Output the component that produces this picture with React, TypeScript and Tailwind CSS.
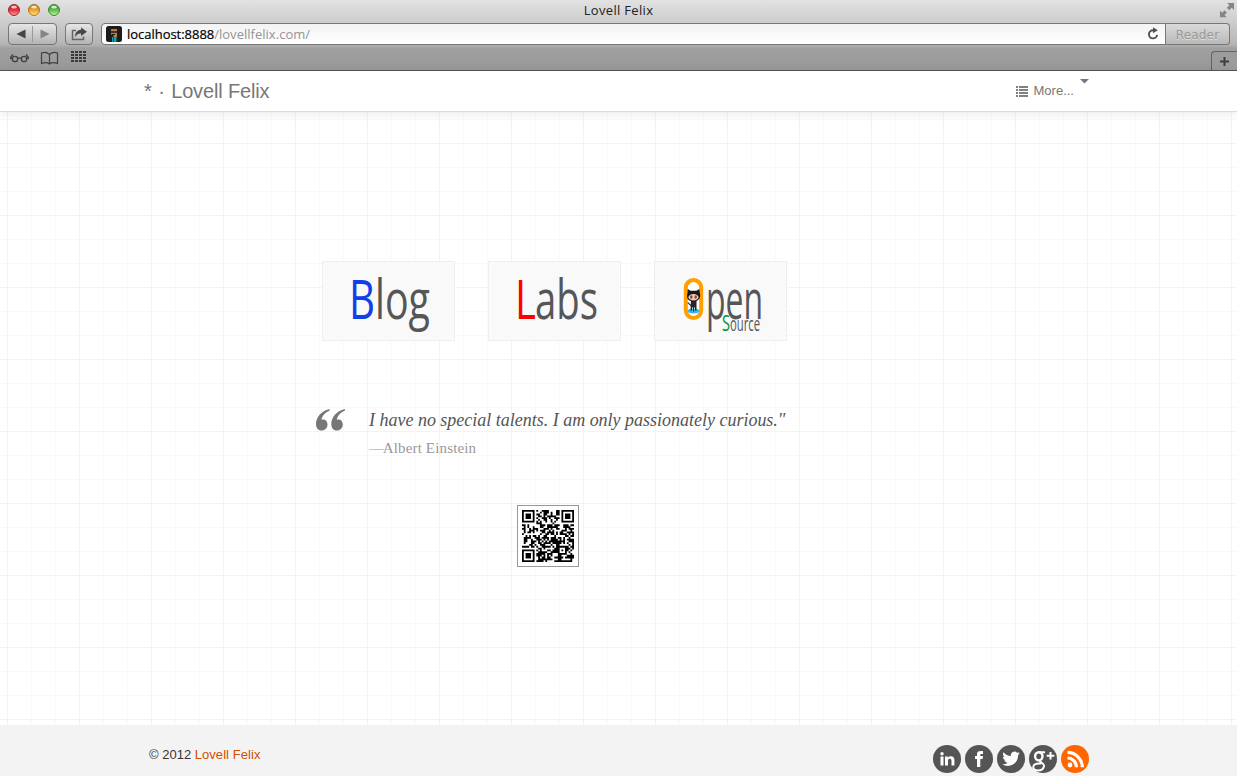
import React from "react";

const N = 29;

function inFinder(x: number, y: number): boolean | null {
  const corners = [
    [0, 0],
    [N - 7, 0],
    [0, N - 7],
  ];
  for (const [cx, cy] of corners) {
    const dx = x - cx;
    const dy = y - cy;
    if (dx >= -1 && dx <= 7 && dy >= -1 && dy <= 7) {
      const d = Math.max(Math.abs(dx - 3), Math.abs(dy - 3));
      return d === 3 || d <= 1;
    }
  }
  return null;
}

function qrPath(): string {
  let seed = 2012;
  let d = "";
  for (let y = 0; y < N; y++) {
    for (let x = 0; x < N; x++) {
      seed = (seed * 1103515245 + 12345) % 2147483648;
      let on = (seed >> 16) % 100 < 54;
      const f = inFinder(x, y);
      if (f !== null) on = f;
      else if (Math.abs(x - 22) <= 2 && Math.abs(y - 22) <= 2) {
        on = Math.max(Math.abs(x - 22), Math.abs(y - 22)) !== 1;
      }
      if (on) d += `M${x} ${y}h1v1h-1z`;
    }
  }
  return d;
}

const QR = qrPath();

function Light({ id, dark, mid, light }: { id: string; dark: string; mid: string; light: string }) {
  return (
    <svg width="14" height="14" viewBox="0 0 14 14">
      <defs>
        <linearGradient id={id} x1="0" y1="0" x2="0" y2="1">
          <stop offset="0" stopColor={dark} />
          <stop offset="0.5" stopColor={mid} />
          <stop offset="1" stopColor={light} />
        </linearGradient>
      </defs>
      <circle cx="7" cy="7.400" r="6.200" fill="#fff" opacity="0.5" />
      <circle cx="7" cy="7" r="5.500" fill={`url(#${id})`} stroke={dark} strokeWidth="1" />
      <ellipse cx="7" cy="4" rx="2.900" ry="1.600" fill="#fff" opacity="0.75" />
    </svg>
  );
}

function BrowserChrome() {
  return (
    <header className="flex h-[71px] flex-col border-b border-[#565656] bg-[linear-gradient(#e2e2e2_0px,#cfcfcf_20px,#b5b5b5_44px,#a0a0a0_48px,#999_70px)] font-['DejaVu_Sans',sans-serif]">
      <div className="grid h-[22px] grid-cols-[1fr_auto_1fr] items-start">
        <div className="flex gap-[6px] pl-[7px] pt-[3px]">
          <Light id="red" dark="#a3202b" mid="#e8303c" light="#ff9a98" />
          <Light id="amber" dark="#a8701c" mid="#f0a528" light="#ffe78a" />
          <Light id="green" dark="#37852f" mid="#62bd4f" light="#c0f5a5" />
        </div>
        <div className="font-['Open_Sans',sans-serif] text-[13px] leading-5 tracking-[0.33px] text-[#222]">Lovell Felix</div>
        <svg className="mr-[2px] mt-[2px] justify-self-end" width="16" height="16" viewBox="0 0 16 16" fill="#858585">
          <path d="M8 1h7v7l-2.300-2.300-2.500 2.500-2.300-2.400 2.500-2.500zM1 8.500l2.200 2.200 2.300-2.400L7.900 10.700 5.500 13 7.700 15.200H1z" />
        </svg>
      </div>

      <div className="flex h-[24px] items-start pl-2 pt-[1px]">
        <div className="flex h-[22px] w-[49px] items-center justify-evenly rounded-[4px] border border-[#777] bg-gradient-to-b from-[#e6e6e6] to-[#b4b4b4]">
          <svg width="10" height="10" viewBox="0 0 10 10"><path d="M9.500.5v9L.5 5z" fill="#454545" /></svg>
          <span className="h-[16px] w-px bg-[#999]" />
          <svg width="10" height="10" viewBox="0 0 10 10"><path d="M.5.5v9L9.500 5z" fill="#858585" /></svg>
        </div>
        <div className="ml-2 flex h-[22px] w-[28px] items-center justify-center rounded-[4px] border border-[#777] bg-gradient-to-b from-[#e6e6e6] to-[#b4b4b4]">
          <svg width="18" height="16" viewBox="0 0 18 16">
            <path d="M6 4.500H2.500V13.500h11V10.500" fill="none" stroke="#666" strokeWidth="1.500" />
            <path d="M11 1.500l6 4.200-6 4.200V7.500C8.500 7.400 6.500 8.500 5 11 5 6.500 7.500 4 11 3.800z" fill="#484848" />
          </svg>
        </div>
        <div className="ml-2 flex h-[22px] w-[1065px] items-center rounded-l-[4px] border border-[#777] bg-gradient-to-b from-[#f3f3f3] to-white pl-1">
          <svg className="shrink-0" width="16" height="16" viewBox="0 0 16 16">
            <rect width="16" height="16" rx="2.500" fill="#1d1b1c" />
            <path d="M5 3h6v8H7.500V8.500H5z" fill="#b87d48" />
            <path d="M5 5.200h6v1.500H5zM6 8h3v1H6z" fill="#241a17" />
            <path d="M6 11h1.300v5H6zM8 11h2.500v5H8z" fill="#12a2ad" />
          </svg>
          <div className="ml-[5px] flex-1 whitespace-nowrap font-['Open_Sans',sans-serif] text-[13px] leading-5">
            <span className="tracking-[-0.03px] text-black [-webkit-text-stroke:0.2px_black]">localhost:8888</span>
            <span className="tracking-[0.02px] text-[#949494]">/lovellfelix.com/</span>
          </div>
          <svg className="mr-[5px]" width="14" height="14" viewBox="0 0 14 14">
            <path d="M8.500 3.200H7a4.100 4.100 0 1 0 4.100 4.600" fill="none" stroke="#505050" strokeWidth="1.900" />
            <path d="M7 .3l4.800 3-4.800 3z" fill="#505050" />
          </svg>
        </div>
        <div className="flex h-[22px] w-[64px] items-center justify-center rounded-r-[4px] border border-l-0 border-[#777] bg-gradient-to-b from-[#dadada] to-[#b9b9b9] pt-px text-[12px] tracking-[0.2px] text-[#989898] [text-shadow:0_1px_0_#ddd]">
          Reader
        </div>
      </div>

      <div className="flex h-[24px] items-start justify-between border-t border-[#ababab]">
        <div className="flex pl-[9px] pt-[4px]">
          <svg width="22" height="14" viewBox="0 0 22 14" fill="none" stroke="#424242" strokeWidth="1.300">
            <circle cx="6" cy="8" r="2.700" />
            <circle cx="15" cy="8" r="2.700" />
            <path d="M8.700 7.500q1.800-1.200 3.600 0M3.300 7.500L1 7M17.700 7.500L20 7M1.500 6.500L4 3.500M19.500 6.500L17 3.500" />
          </svg>
          <svg className="ml-[9px]" width="19" height="14" viewBox="0 0 19 14" fill="none" stroke="#424242" strokeWidth="1.200">
            <path d="M9.500 3.500C7.500 1.500 4 1 1.500 2V12.500c2.500-1 6-1 8 .5 2-1.500 5.500-1.500 8-.5V2c-2.500-1-6-.5-8 1.500zV13" />
          </svg>
          <svg className="ml-[12px]" width="17" height="14" viewBox="0 0 17 14" fill="#3a3a3a">
            <path d="M0 0h3v2H0zM4 0h3v2H4zM8 0h3v2H8zM12 0h3v2h-3zM0 3h3v2H0zM4 3h3v2H4zM8 3h3v2H8zM12 3h3v2h-3zM0 6h3v2H0zM4 6h3v2H4zM8 6h3v2H8zM12 6h3v2h-3zM0 9h3v2H0zM4 9h3v2H4zM8 9h3v2H8zM12 9h3v2h-3z" />
          </svg>
        </div>
        <div className="mt-[4px] flex h-[19px] w-[26px] items-center justify-center rounded-tl-[4px] border-l border-t border-[#636363] bg-[#9c9c9c]">
          <svg width="9" height="9" viewBox="0 0 9 9" fill="#3e3e3e"><path d="M3.500 0h2v3.500H9v2H5.500V9h-2V5.500H0v-2h3.500z" /></svg>
        </div>
      </div>
    </header>
  );
}

function Nav() {
  return (
    <nav className="relative flex h-[41px] items-start justify-between border-b border-[#cfdfe5] bg-white pl-[144px] pr-[148px] font-['Liberation_Sans',sans-serif] text-[#777] shadow-[0_1px_10px_rgba(0,0,0,0.1)]">
      <a className="whitespace-pre pt-[10px] text-[20px] leading-5">
        <span className="tracking-[0.4px]">* · </span>
        <span className="tracking-[-0.15px]">Lovell Felix</span>
      </a>
      <a className="flex pt-[8px] text-[13px] leading-6">
        <svg className="mr-[6px] mt-[7px]" width="12" height="11" viewBox="0 0 12 11" fill="#808080">
          <path d="M0 0h2v2H0zM3 0h9v2H3zM0 3h2v2H0zM3 3h9v2H3zM0 6h2v2H0zM3 6h9v2H3zM0 9h2v2H0zM3 9h9v2H3z" />
        </svg>
        <span>More...</span>
        <svg className="ml-[6px]" width="9" height="5" viewBox="0 0 9 5"><path d="M0 0h9L4.500 4.500z" fill="#777" /></svg>
      </a>
    </nav>
  );
}

const cardClass = "flex h-[80px] w-[133px] items-center justify-center border border-[#eeeeee] bg-[#f9f9f9] shadow-[inset_0_0_8px_rgba(255,255,255,0.5)]";

function Word({ first, rest, color, firstWidth, restX, restWidth }: { first: string; rest: string; color: string; firstWidth: number; restX: number; restWidth: number }) {
  return (
    <div className={cardClass}>
      <svg className="overflow-visible" width="131" height="78" viewBox="0 0 131 78" fontFamily="'Open Sans', sans-serif" fontSize="55" fontWeight="400">
        <text x="26" y="57" fill={color} textLength={firstWidth} lengthAdjust="spacingAndGlyphs">{first}</text>
        <text x={restX} y="57" fill="#555658" textLength={restWidth} lengthAdjust="spacingAndGlyphs">{rest}</text>
      </svg>
    </div>
  );
}

function OpenSource() {
  return (
    <div className={cardClass}>
      <svg className="overflow-visible" width="131" height="78" viewBox="0 0 131 78" fontFamily="'Open Sans', sans-serif">
        <rect x="30.800" y="18" width="15.400" height="38" rx="7.700" fill="#fff" stroke="#ffa000" strokeWidth="4" />
        <text x="51" y="57" fontSize="54" fill="#555658" textLength="57" lengthAdjust="spacingAndGlyphs">pen</text>
        <text x="67" y="69" fontSize="22" fill="#009245" textLength="8" lengthAdjust="spacingAndGlyphs">S</text>
        <text x="75" y="69" fontSize="20" fill="#555658" textLength="30" lengthAdjust="spacingAndGlyphs">ource</text>
        <ellipse cx="38.500" cy="49" rx="6" ry="2.400" fill="#39b5e9" />
        <path d="M36 37h5.500v11.500H40v-3h-1v4h-1v-4h-1v3h-1.500zM33 40l3 3v1.500L32.500 41z" fill="#25252b" />
        <path d="M32.700 27l2.800 1.800h6L44.300 27l.5 4c1.400 4-.5 8.500-6.300 8.500s-7.400-4-6-8.500z" fill="#18191d" />
        <ellipse cx="38.500" cy="35.200" rx="5" ry="3.200" fill="#f2c8b2" />
        <ellipse cx="36.300" cy="35" rx="1.200" ry="1.700" fill="#8c4035" />
        <ellipse cx="40.700" cy="35" rx="1.200" ry="1.700" fill="#8c4035" />
      </svg>
    </div>
  );
}

function Social() {
  return (
    <div className="flex gap-1">
      <svg width="28" height="28" viewBox="0 0 28 28">
        <circle cx="14" cy="14" r="14" fill="#555" />
        <path d="M7.500 11.500h3V20.500h-3zM12 11.500h2.900v1.200c1.600-2.300 6.500-1.900 6.500 2V20.500h-2.900v-5c0-2.500-3.500-2.300-3.500 0v5H12z" fill="#fff" />
        <circle cx="9" cy="8.700" r="1.700" fill="#fff" />
      </svg>
      <svg width="28" height="28" viewBox="0 0 28 28">
        <circle cx="14" cy="14" r="14" fill="#555" />
        <path d="M12 22v-8h-2v-2.900h2V9.300C12 7 13.300 6 15.600 6H18v2.900h-1.500c-1 0-1.200.4-1.200 1.100v1.100H18l-.4 2.900h-2.300v8z" fill="#fff" />
      </svg>
      <svg width="28" height="28" viewBox="0 0 28 28">
        <circle cx="14" cy="14" r="14" fill="#555" />
        <path transform="translate(5.300 5) scale(.73)" d="M23.950 4.570a10 10 0 0 1-2.820.77 4.960 4.960 0 0 0 2.160-2.720c-.95.550-2 .950-3.120 1.180a4.920 4.920 0 0 0-8.380 4.480C7.690 8.090 4.070 6.130 1.640 3.160a4.820 4.820 0 0 0-.67 2.480c0 1.710.87 3.210 2.190 4.100a4.900 4.900 0 0 1-2.230-.62v.06a4.920 4.920 0 0 0 3.950 4.830 5 5 0 0 1-2.210.08 4.940 4.940 0 0 0 4.600 3.420A9.870 9.870 0 0 1 0 19.540a14 14 0 0 0 7.550 2.210c9.050 0 14-7.500 14-13.980 0-.21 0-.42-.02-.63a9.940 9.940 0 0 0 2.420-2.570z" fill="#fff" />
      </svg>
      <svg width="28" height="28" viewBox="0 0 28 28">
        <circle cx="14" cy="14" r="14" fill="#555" />
        <g fill="none" stroke="#fff">
          <ellipse cx="9.800" cy="11.300" rx="3.700" ry="4.100" strokeWidth="2.400" />
          <path d="M10 7.200H16M11 15.200c-1.500 1.900 4.500 2.700 4 6-.7 3-3.500 4.300-6 4.300-3.300 0-5-1.500-4.700-3.700.4-2.700 4-3.500 8-3.200" strokeWidth="2" />
          <path d="M21.500 7v7.500M17.700 10.700h7.600" strokeWidth="2" />
        </g>
      </svg>
      <svg width="28" height="28" viewBox="0 0 28 28">
        <circle cx="14" cy="14" r="14" fill="#f60" />
        <circle cx="9" cy="20" r="2.400" fill="#fff" />
        <path d="M6.500 13a9.200 9.200 0 0 1 9 9.300M6.500 7.300A15 15 0 0 1 21.300 22.300" fill="none" stroke="#fff" strokeWidth="3.200" />
      </svg>
    </div>
  );
}

export default function App() {
  return (
    <div className="flex h-[776px] w-[1237px] flex-col overflow-hidden bg-white">
      <BrowserChrome />
      <Nav />
      <main className="h-[613px] bg-[image:linear-gradient(to_right,#f3f3f3_1px,transparent_1px),linear-gradient(#f3f3f3_1px,transparent_1px),linear-gradient(to_right,#f9f9f9_1px,transparent_1px),linear-gradient(#f9f9f9_1px,transparent_1px)] bg-[position:7px_31px,7px_31px,7px_7px,7px_7px] bg-[size:72px_72px,72px_72px,24px_24px,24px_24px] pt-[149px]">
        <div className="flex gap-[33px] pl-[322px]">
          <Word first="B" rest="log" color="#1240e8" firstWidth={26} restX={52} restWidth={55} />
          <Word first="L" rest="abs" color="#ff0000" firstWidth={21} restX={46} restWidth={63} />
          <OpenSource />
        </div>
        <div className="flex pl-[315px] pt-[66px]">
          <svg className="mt-[2px]" width="30" height="22" viewBox="0 0 30 22" fill="#777">
            <path d="M14.500 0v1.700C9.500 3.700 7 7 6.500 11c2.500-1.500 6 .5 6 4.500 0 3.500-2.500 6-5.800 6C3 21.500 1 18.800 1 15 1 8.500 6 2 14.500 0z" />
            <path d="M29.800 0v1.700c-5 2-7.500 5.300-8 9.300 2.500-1.500 6 .5 6 4.500 0 3.500-2.500 6-5.800 6-3.700 0-5.700-2.700-5.700-6.500C16.300 8.500 21.300 2 29.800 0z" />
          </svg>
          <blockquote className="ml-[24px] whitespace-nowrap font-['Liberation_Serif',serif]">
            <p className="text-[18px] italic leading-[27px] tracking-[-0.01px] text-[#555]">I have no special talents. I am only passionately curious."</p>
            <p className="text-[15px] leading-[28px] text-[#999]"><span className="tracking-[-2.5px]">— </span><span className="tracking-[0.15px]">Albert Einstein</span></p>
          </blockquote>
        </div>
        <div className="ml-[517px] mt-[43px] flex h-[62px] w-[62px] items-center justify-center border border-[#999] bg-white">
          <svg width="52" height="52" viewBox="0 0 29 29"><path d={QR} fill="#000" /></svg>
        </div>
      </main>
      <footer className="flex h-[51px] items-start justify-between bg-[#f3f3f3] pl-[149px] pr-[148px] pt-5 font-['Liberation_Sans',sans-serif] text-[13px] leading-5 text-[#333]">
        <p>© 2012 <a className="tracking-[0.06px] text-[#d05000]">Lovell Felix</a></p>
        <Social />
      </footer>
    </div>
  );
}
